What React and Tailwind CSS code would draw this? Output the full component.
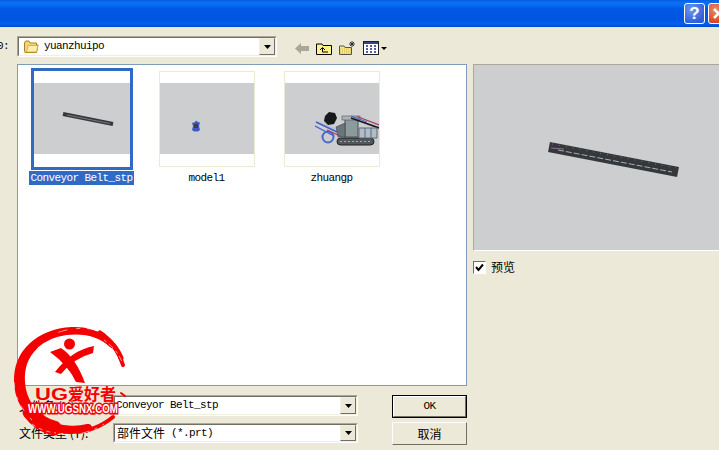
import React from "react";

const mono = "font-['Liberation_Mono','Noto_Sans_CJK_SC',monospace] text-[11px] tracking-[-0.6px] text-black";
const cjk = "font-['Noto_Sans_CJK_SC',sans-serif] text-[12px] tracking-normal text-black";

function TitleBar() {
  return (
    <div className="flex h-[27px] items-center justify-end gap-[3px] overflow-hidden bg-[linear-gradient(180deg,#0a5be0_0px,#0a6cf2_2px,#0a70f5_4px,#0058e4_9px,#0054e0_19px,#0062f0_24px,#0050d8_26px,#0046c8_27px)]">
      <div className="flex h-[21px] w-[21px] shrink-0 items-center justify-center rounded-[3px] border border-white bg-[radial-gradient(circle_at_35%_30%,#6f97f0,#2f5fd8_75%)] font-['Liberation_Sans',sans-serif] text-[17px] font-bold text-white">
        ?
      </div>
      <div className="-mr-[10px] flex h-[21px] w-[21px] shrink-0 items-center justify-center rounded-[3px] border border-white bg-[radial-gradient(circle_at_35%_30%,#ec8a68,#d8401c_75%)]">
        <svg width="13" height="13" viewBox="0 0 13 13">
          <path d="M2 2 L11 11 M11 2 L2 11" stroke="#fff" strokeWidth="2.6" />
        </svg>
      </div>
    </div>
  );
}

function ArrowButton() {
  return (
    <div className="flex w-[16px] shrink-0 items-center justify-center border border-b-[#716f64] border-l-[#f1efe2] border-r-[#716f64] border-t-[#f1efe2] bg-[#ece9d8]">
      <svg width="7" height="4" viewBox="0 0 7 4">
        <path d="M0 0 H7 L3.5 4 Z" fill="#000" />
      </svg>
    </div>
  );
}

function Combo({ className, children }) {
  return (
    <div className={`border border-b-white border-l-[#aca899] border-r-white border-t-[#aca899] ${className}`}>
      <div className="flex h-full border border-b-[#f1efe2] border-l-[#716f64] border-r-[#f1efe2] border-t-[#716f64] bg-white">
        <div className="flex min-w-0 flex-1 items-center overflow-hidden">{children}</div>
        <ArrowButton />
      </div>
    </div>
  );
}

function Toolbar() {
  return (
    <div className="flex h-[37px] items-end pb-[7px]">
      <div className={`${mono} w-[17px] overflow-hidden pb-[3px]`}>
        <span className="-ml-[3px] block">0:</span>
      </div>
      <Combo className="h-[21px] w-[260px]">
        <svg className="ml-[5px] shrink-0" width="15" height="13" viewBox="0 0 15 13">
          <path d="M0.5 3 V11.5 Q0.5 12.5 2 12.5 H12.5 L14 5 H12.5 V3 H6 L5 1 H1.5 Z" fill="#f7d673" stroke="#a88420" />
          <path d="M2.5 12 L4 5.5 H14 L12.5 12 Z" fill="#fdeeae" stroke="#c9a030" strokeWidth="0.7" />
        </svg>
        <span className={`${mono} ml-[5px]`}>yuanzhuipo</span>
      </Combo>
      <div className="mb-[2px] ml-[18px] flex items-center">
        <svg width="14" height="11" viewBox="0 0 14 11">
          <path d="M0 5.5 L6 0 V3 H14 V8 H6 V11 Z" fill="#a8a799" />
        </svg>
        <svg className="ml-[7px]" width="16" height="13" viewBox="0 0 16 13">
          <path d="M0.5 2 H6 L7 3.5 H15.5 V12.5 H0.5 Z" fill="#fbf28a" stroke="#000" />
          <path d="M4 8 L6.5 5.5 L9 8 M6.5 6 V10 H12" fill="none" stroke="#000" />
        </svg>
        <svg className="ml-[7px]" width="17" height="14" viewBox="0 0 17 14">
          <path d="M0.5 5 H5 L6 6.5 H12.5 V13.5 H0.5 Z" fill="#f5e88a" stroke="#555" />
          <path d="M1 8 H12 M1 10 H12 M1 12 H12" stroke="#cdb94a" strokeDasharray="1 1" />
          <path d="M13 0 V6 M10 3 H16 M11 1 L15 5 M15 1 L11 5" stroke="#222" strokeWidth="0.9" />
        </svg>
        <svg className="ml-[7px]" width="24" height="14" viewBox="0 0 24 14">
          <rect x="0.5" y="0.5" width="15" height="13" fill="#fff" stroke="#222" />
          <rect x="1" y="1" width="14" height="2" fill="#33448c" />
          <path d="M3 5 H5 M7 5 H9 M11 5 H13 M3 8 H5 M7 8 H9 M11 8 H13 M3 11 H5 M7 11 H9 M11 11 H13" stroke="#1a2a8c" strokeWidth="1.4" />
          <path d="M18 6 H24 L21 9 Z" fill="#000" />
        </svg>
      </div>
    </div>
  );
}

function ConveyorThumb() {
  return (
    <svg width="96" height="71" viewBox="0 0 96 71">
      <path d="M29 31 L79 41" stroke="#35373a" strokeWidth="4" />
      <path d="M33 32 L76 40.5" stroke="#8d9a9c" strokeWidth="0.7" />
    </svg>
  );
}

function ModelThumb() {
  return (
    <svg width="94" height="71" viewBox="0 0 94 71">
      <path d="M32 40 L35 39 L36 37.5 L38 39 L40 39.5 L39 43 L40 47 L38 48.5 L34 48.5 L32 47 L33 43 Z" fill="#4058c8" />
      <rect x="34" y="41" width="4" height="4" fill="#3a3f46" />
    </svg>
  );
}

function MachineThumb() {
  return (
    <svg width="94" height="71" viewBox="0 0 94 71">
      <path d="M40 33 L44 29 L50 30 L52 35 L49 41 L43 42 L39 38 Z" fill="#17181a" />
      <rect x="60" y="36" width="13" height="18" fill="#8c9a9e" stroke="#4a5054" />
      <rect x="57" y="33" width="18" height="4" fill="#aab4b6" stroke="#555" strokeWidth="0.6" />
      <path d="M51 44 L60 40 V54 H53 Z" fill="#6a767a" stroke="#3d4448" strokeWidth="0.6" />
      <rect x="52" y="55" width="37" height="7" rx="3.5" fill="#51575a" stroke="#222" />
      <path d="M55 58.5 H86" stroke="#a4a8aa" strokeDasharray="2 2" />
      <path d="M31 39 L52 49 M30 43 L49 53" stroke="#3f60c8" strokeWidth="1.4" />
      <path d="M34 39 L50 46" stroke="#a9b6d8" strokeWidth="0.8" />
      <circle cx="43" cy="54" r="5.5" fill="none" stroke="#4a6bc4" strokeWidth="2" />
      <path d="M42 47 L55 53" stroke="#a23a6a" strokeWidth="1.2" />
      <path d="M66 35 L94 45" stroke="#18191b" strokeWidth="1.8" />
      <path d="M66 33 L82 39" stroke="#3f60c8" strokeWidth="1" />
      <path d="M72 33.5 L94 42" stroke="#a23a6a" strokeWidth="1.2" />
      <path d="M74 45 H92 V55 H74 Z" fill="#b4bcc0" stroke="#5d6a78" />
      <path d="M80 45 V55 M86 45 V55" stroke="#4f6da8" />
    </svg>
  );
}

function Thumb({ label, selected, children }) {
  return (
    <div className="flex w-[125px] flex-col items-center">
      {selected ? (
        <div className="h-[102px] w-[102px] border-[3px] border-[#316ac5] bg-white pt-[12px]">
          <div className="h-[71px] bg-[#cdced0]">{children}</div>
        </div>
      ) : (
        <div className="m-[3px] h-[96px] w-[96px] border border-[#ece9d8] bg-white pt-[11px]">
          <div className="h-[71px] bg-[#cdced0]">{children}</div>
        </div>
      )}
      <div className={`${mono} mt-px flex h-[14px] items-center px-px ${selected ? "bg-[#316ac5] text-white" : ""}`}>
        {label}
      </div>
    </div>
  );
}

function FileList() {
  return (
    <div className="ml-[17px] h-[322px] w-[450px] border border-[#7f9db9] bg-white pl-px pt-[3px]">
      <div className="flex">
        <Thumb label="Conveyor Belt_stp" selected>
          <ConveyorThumb />
        </Thumb>
        <Thumb label="model1">
          <ModelThumb />
        </Thumb>
        <Thumb label="zhuangp">
          <MachineThumb />
        </Thumb>
      </div>
    </div>
  );
}

function BottomForm() {
  return (
    <div className="ml-[17px] flex w-[450px] pt-[9px]">
      <div className="flex w-[375px] flex-col gap-[7px]">
        <div className="flex items-center">
          <div className={`${cjk} w-[96px] pl-[2px]`}>文件名 (N):</div>
          <Combo className="h-[21px] w-[245px]">
            <span className={`${mono} ml-px`}>Conveyor Belt_stp</span>
          </Combo>
        </div>
        <div className="flex items-center">
          <div className={`${cjk} w-[96px] pl-[2px]`}>文件类型 (T):</div>
          <Combo className="h-[20px] w-[245px]">
            <span className={`${cjk} ml-[2px]`}>部件文件</span>
            <span className={`${mono} ml-[6px]`}>(*.prt)</span>
          </Combo>
        </div>
      </div>
      <div className="flex w-[75px] flex-col gap-[4px]">
        <div className="h-[23px] border border-black">
          <div className={`${mono} flex h-full items-center justify-center border border-b-[#716f64] border-l-white border-r-[#716f64] border-t-white`}>
            OK
          </div>
        </div>
        <div className={`${cjk} flex h-[23px] items-center justify-center border border-b-[#716f64] border-l-white border-r-[#716f64] border-t-white`}>
          取消
        </div>
      </div>
    </div>
  );
}

function PreviewPane() {
  return (
    <div className="flex flex-1 flex-col pl-[6px] pt-[37px]">
      <div className="h-[187px] border-b border-l border-t border-b-white border-l-[#aca899] border-t-[#aca899] bg-[#cdced0]">
        <svg width="245" height="185" viewBox="0 0 245 185">
          <path d="M75 82 L204 107" stroke="#35373a" strokeWidth="10" />
          <path d="M84 85 L198 107" stroke="#9fb3b6" strokeWidth="1" strokeDasharray="6 2" />
          <path d="M78 79 L202 103" stroke="#808186" strokeWidth="0.8" strokeDasharray="1 6" />
          <path d="M77 83 L90 84" stroke="#8a6f9a" strokeWidth="1" />
        </svg>
      </div>
      <div className="mt-[7px] flex items-center">
        <div className="flex h-[13px] w-[13px] items-center justify-center border border-b-white border-l-[#716f64] border-r-white border-t-[#716f64] bg-white">
          <svg width="9" height="9" viewBox="0 0 9 9">
            <path d="M1 4 L3.5 7 L8 1.5" fill="none" stroke="#000" strokeWidth="2" />
          </svg>
        </div>
        <span className={`${cjk} ml-[5px]`}>预览</span>
      </div>
    </div>
  );
}

function Watermark() {
  return (
    <svg className="pointer-events-none absolute left-[10px] top-[320px]" width="120" height="120" viewBox="10 320 120 120">
      <g fill="none" stroke="#f40000" strokeLinecap="round">
        <path d="M123 365 C116 340 96 328 72 329 C38 331 15 352 16 382 C17 410 40 432 72 432 C88 432 102 426 113 417" strokeWidth="4" />
        <path d="M112 345 C100 333 84 330 66 332 C42 335 22 352 19 376 C17 396 27 414 44 424" strokeWidth="6" />
        <path d="M34 346 C24 356 20 368 21 382 C22 400 32 416 50 425 C60 430 76 431 88 428" strokeWidth="8" />
        <path d="M30 412 C36 420 44 426 54 428" strokeWidth="15" />
        <path d="M100 333 C110 340 117 348 121 358" strokeWidth="5" strokeDasharray="5 2 9 2" />
        <path d="M121 393 L125 396" strokeWidth="2" />
      </g>
      <g fill="none" stroke="#ffffff" strokeWidth="0.6">
        <path d="M96 330 C84 327 66 328 52 335" strokeDasharray="9 7 4 9" />
        <path d="M104 340 C112 346 118 352 122 362" strokeDasharray="3 3 6 4" />
        <path d="M14 382 C15 398 22 410 32 420" strokeDasharray="6 9 3 7" />
        <path d="M60 434 C76 436 92 432 104 424" strokeDasharray="8 5 3 6" />
        <path d="M32 424 C40 430 48 432 56 433" strokeDasharray="4 4" />
      </g>
      <circle cx="69.5" cy="344" r="5.5" fill="#f40000" />
      <path d="M50 352 L61 348 Q76 358 85 383 L76 382 Q68 365 50 352 Z" fill="#f40000" />
      <path d="M94 346 Q72 350 55 372 L61 374 Q74 358 93 353 Z" fill="#f40000" />
      <text x="35" y="400" textLength="33" lengthAdjust="spacingAndGlyphs" className="fill-[#f40000] font-['Liberation_Sans',sans-serif] text-[16px] font-bold">UG</text>
      <text x="68" y="400" className="fill-[#f40000] font-['Noto_Sans_CJK_SC',sans-serif] text-[16px] font-bold">爱好者</text>
      <text x="28" y="413" textLength="90" lengthAdjust="spacingAndGlyphs" paintOrder="stroke" stroke="#f40000" strokeWidth="3" className="fill-white font-['Liberation_Sans',sans-serif] text-[12px] font-bold">WWW.UGSNX.COM</text>
    </svg>
  );
}

export default function App() {
  return (
    <div className="relative flex h-[450px] w-[719px] flex-col overflow-hidden bg-[#ece9d8]">
      <TitleBar />
      <div className="flex flex-1">
        <div className="w-[467px] shrink-0">
          <Toolbar />
          <FileList />
          <BottomForm />
        </div>
        <PreviewPane />
      </div>
      <Watermark />
    </div>
  );
}
